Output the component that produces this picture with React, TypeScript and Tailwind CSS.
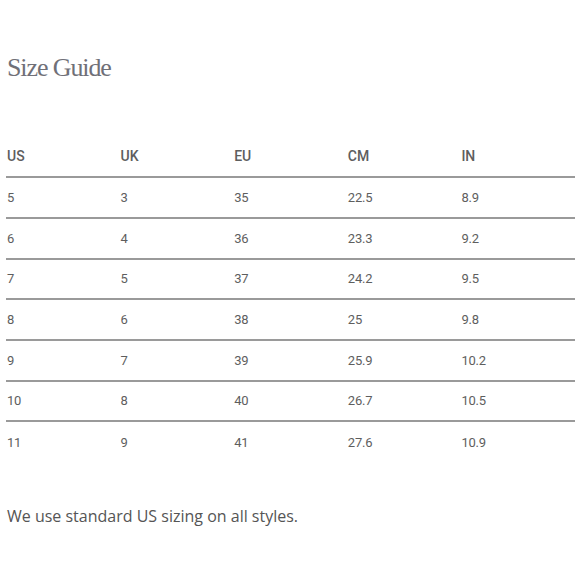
import React from "react";

const headers = ["US", "UK", "EU", "CM", "IN"];

const rows = [
  { cells: ["5", "3", "35", "22.5", "8.9"], h: "h-[41px]" },
  { cells: ["6", "4", "36", "23.3", "9.2"], h: "h-[41px]" },
  { cells: ["7", "5", "37", "24.2", "9.5"], h: "h-[40px]" },
  { cells: ["8", "6", "38", "25", "9.8"], h: "h-[41px]" },
  { cells: ["9", "7", "39", "25.9", "10.2"], h: "h-[41px]" },
  { cells: ["10", "8", "40", "26.7", "10.5"], h: "h-[40px]" },
  { cells: ["11", "9", "41", "27.6", "10.9"], h: "h-[41px]" },
];

function App() {
  return (
    <div className="w-[580px] h-[580px] bg-white px-[6px] font-['Roboto',sans-serif] text-[#5e5e5e]">
      <h1 className="pt-[52px] pl-[1px] text-[26px] leading-[32px] text-[#707078] font-['Liberation_Serif',serif] tracking-[-1.1px]">
        Size Guide
      </h1>

      <div className="mt-[53px] w-[569px]">
        <div className="grid grid-cols-5 h-[41px] items-center border-b-2 border-[#9a9a9a] text-[14px] font-medium pl-[1px]">
          {headers.map((h) => (
            <span key={h}>{h}</span>
          ))}
        </div>

        {rows.map((r, i) => (
          <div
            key={i}
            className={`grid grid-cols-5 ${r.h} items-center text-[13px] pl-[1px] ${
              i < rows.length - 1 ? "border-b-2 border-[#9a9a9a]" : ""
            }`}
          >
            {r.cells.map((c, j) => (
              <span key={j} className="tracking-[-0.2px]">
                {c}
              </span>
            ))}
          </div>
        ))}
      </div>

      <p className="mt-[41px] pl-[1px] text-[16px] font-medium text-[#555] font-['Open_Sans',sans-serif]">
        We use standard US sizing on all styles.
      </p>
    </div>
  );
}

export default App;
